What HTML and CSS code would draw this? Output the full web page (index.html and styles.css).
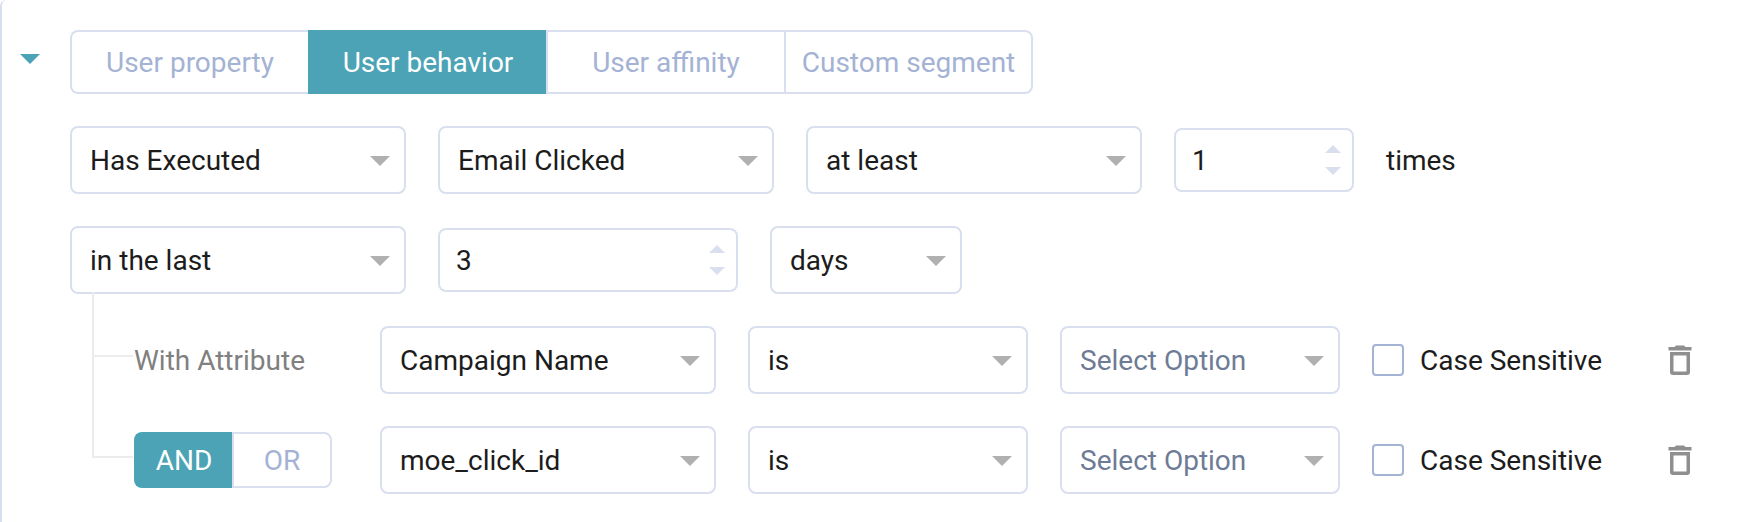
FILE: index.html
```html
<!DOCTYPE html>
<html lang="en">
<head>
	<title>Segment filter</title>
	<meta charset="UTF-8">
	<meta name="viewport" content="width=device-width, initial-scale=1.0">
	<link rel="stylesheet" href="styles.css">
</head>
<body>
	<main class="filter">
		<button class="collapse" type="button" aria-label="Collapse"></button>

		<form class="filter-body">
			<div class="tabs">
				<button type="button" class="tab">User property</button>
				<button type="button" class="tab active">User behavior</button>
				<button type="button" class="tab">User affinity</button>
				<button type="button" class="tab tab-wide">Custom segment</button>
			</div>

			<div class="row">
				<select class="select" aria-label="Execution">
					<option>Has Executed</option>
				</select>
				<select class="select" aria-label="Event">
					<option>Email Clicked</option>
				</select>
				<select class="select" aria-label="Comparison">
					<option>at least</option>
				</select>
				<div class="number number-small">
					<input type="number" id="times" value="1">
					<div class="steps">
						<button type="button" class="step up" aria-label="More" onclick="times.stepUp()"></button>
						<button type="button" class="step down" aria-label="Less" onclick="times.stepDown()"></button>
					</div>
				</div>
				<label for="times">times</label>
			</div>

			<div class="row">
				<select class="select" aria-label="Period">
					<option>in the last</option>
				</select>
				<div class="number">
					<input type="number" id="period" value="3" aria-label="Period length">
					<div class="steps">
						<button type="button" class="step up" aria-label="More" onclick="period.stepUp()"></button>
						<button type="button" class="step down" aria-label="Less" onclick="period.stepDown()"></button>
					</div>
				</div>
				<select class="select select-small" aria-label="Unit">
					<option>days</option>
				</select>
			</div>

			<div class="attributes">
				<div class="row attribute">
					<div class="lead">With Attribute</div>
					<select class="select" aria-label="Attribute">
						<option>Campaign Name</option>
					</select>
					<select class="select select-medium" aria-label="Operator">
						<option>is</option>
					</select>
					<select class="select select-medium placeholder" aria-label="Value">
						<option>Select Option</option>
					</select>
					<label class="check"><input type="checkbox">Case Sensitive</label>
					<button type="button" class="delete" aria-label="Delete">
						<svg viewBox="0 0 24 30" width="24" height="30"><path d="M0.5 2H6.5L8 0.5H16L17.5 2H23.5V5.5H0.5Z"/><path fill-rule="evenodd" d="M2 7H22V27Q22 30 19 30H5Q2 30 2 27ZM5.5 10.5V26.5H18.5V10.5Z"/></svg>
					</button>
				</div>

				<div class="row attribute">
					<div class="lead">
						<div class="toggle">
							<button type="button" class="active">AND</button>
							<button type="button">OR</button>
						</div>
					</div>
					<select class="select" aria-label="Attribute">
						<option>moe_click_id</option>
					</select>
					<select class="select select-medium" aria-label="Operator">
						<option>is</option>
					</select>
					<select class="select select-medium placeholder" aria-label="Value">
						<option>Select Option</option>
					</select>
					<label class="check"><input type="checkbox">Case Sensitive</label>
					<button type="button" class="delete" aria-label="Delete">
						<svg viewBox="0 0 24 30" width="24" height="30"><path d="M0.5 2H6.5L8 0.5H16L17.5 2H23.5V5.5H0.5Z"/><path fill-rule="evenodd" d="M2 7H22V27Q22 30 19 30H5Q2 30 2 27ZM5.5 10.5V26.5H18.5V10.5Z"/></svg>
					</button>
				</div>
			</div>
		</form>
	</main>
</body>
</html>
```
FILE: styles.css
```css
* {
	box-sizing: border-box;
}
body {
	margin: 0;
	background-color: #fff;
	color: #1c1c1c;
	font-family: Roboto, Arial, sans-serif;
	font-size: 28px;
}
button, input, select {
	margin: 0;
	padding: 0;
	border: 0;
	border-radius: 0;
	background: none;
	color: inherit;
	font: inherit;
}
.filter {
	display: flex;
	min-height: 100vh;
	padding: 30px 52px 28px 18px;
	border-left: 2px solid #d9dfee;
	border-top-left-radius: 6px;
}
.collapse {
	width: 20px;
	height: 10px;
	margin: 24px 30px 0 0;
	background-color: #4ba3b5;
	clip-path: polygon(0 0, 100% 0, 50% 100%);
}
.filter-body {
	flex: 1;
	display: flex;
	flex-direction: column;
	gap: 32px;
}

/* tabs */
.tabs {
	display: flex;
}
.tab {
	width: 238px;
	height: 64px;
	border: 2px solid #d9dfee;
	border-right: 0;
	color: #a4b2d4;
}
.tab:first-child {
	border-radius: 8px 0 0 8px;
}
.tab-wide {
	width: 249px;
	border-right: 2px solid #d9dfee;
	border-radius: 0 8px 8px 0;
}
.tab.active, .toggle .active {
	border-color: #4ba3b5;
	background-color: #4ba3b5;
	color: #fff;
}

/* fields */
.row {
	display: flex;
	align-items: center;
	gap: 32px;
}
.select {
	appearance: none;
	width: 336px;
	height: 68px;
	padding: 0 44px 0 18px;
	border: 2px solid #d9dfee;
	border-radius: 8px;
	background: url("data:image/svg+xml,%3Csvg xmlns='http://www.w3.org/2000/svg' width='20' height='10'%3E%3Cpath d='M0 0h20L10 10z' fill='%23b0b0b0'/%3E%3C/svg%3E") no-repeat right 14px top 28px;
}
.select-medium {
	width: 280px;
}
.select-small {
	width: 192px;
}
.placeholder {
	color: #6e7b96;
}
.number {
	display: flex;
	align-items: center;
	width: 300px;
	height: 64px;
	padding: 0 11px 0 16px;
	border: 2px solid #d9dfee;
	border-radius: 8px;
}
.number-small {
	width: 180px;
}
.number input {
	flex: 1;
	min-width: 0;
	appearance: textfield;
}
.number input::-webkit-inner-spin-button {
	appearance: none;
	margin: 0;
}
.steps {
	display: flex;
	flex-direction: column;
	gap: 14px;
}
.step {
	width: 16px;
	height: 8px;
	background-color: #d9dfee;
}
.up {
	clip-path: polygon(50% 0, 100% 100%, 0 100%);
}
.down {
	clip-path: polygon(0 0, 100% 0, 50% 100%);
}

/* attributes, joined to the row above by the tree lines */
.attributes {
	display: flex;
	flex-direction: column;
	gap: 32px;
	padding-left: 64px;
}
.attribute {
	position: relative;
}
.attribute::before {
	content: "";
	position: absolute;
	left: -42px;
	bottom: 37px;
	width: 39px;
	height: 63px;
	border-left: 2px solid #ececec;
	border-bottom: 2px solid #ececec;
}
.attribute + .attribute::before {
	bottom: 36px;
	height: 101px;
}
.lead {
	width: 214px;
	color: #808080;
}
.toggle {
	display: flex;
	width: 198px;
}
.toggle button {
	flex: 1;
	height: 56px;
	border: 2px solid #d9dfee;
	border-radius: 0 8px 8px 0;
	color: #a4b2d4;
}
.toggle .active {
	border-right: 0;
	border-radius: 8px 0 0 8px;
	color: #fff;
}
.check {
	display: flex;
	align-items: center;
	gap: 16px;
}
.check input {
	appearance: none;
	width: 32px;
	height: 32px;
	border: 2px solid #a4b2d4;
	border-radius: 4px;
}
.check input:checked {
	background-color: #4ba3b5;
}
.delete {
	display: flex;
	margin-left: auto;
}
.delete svg {
	fill: #8f8f8f;
}
```
